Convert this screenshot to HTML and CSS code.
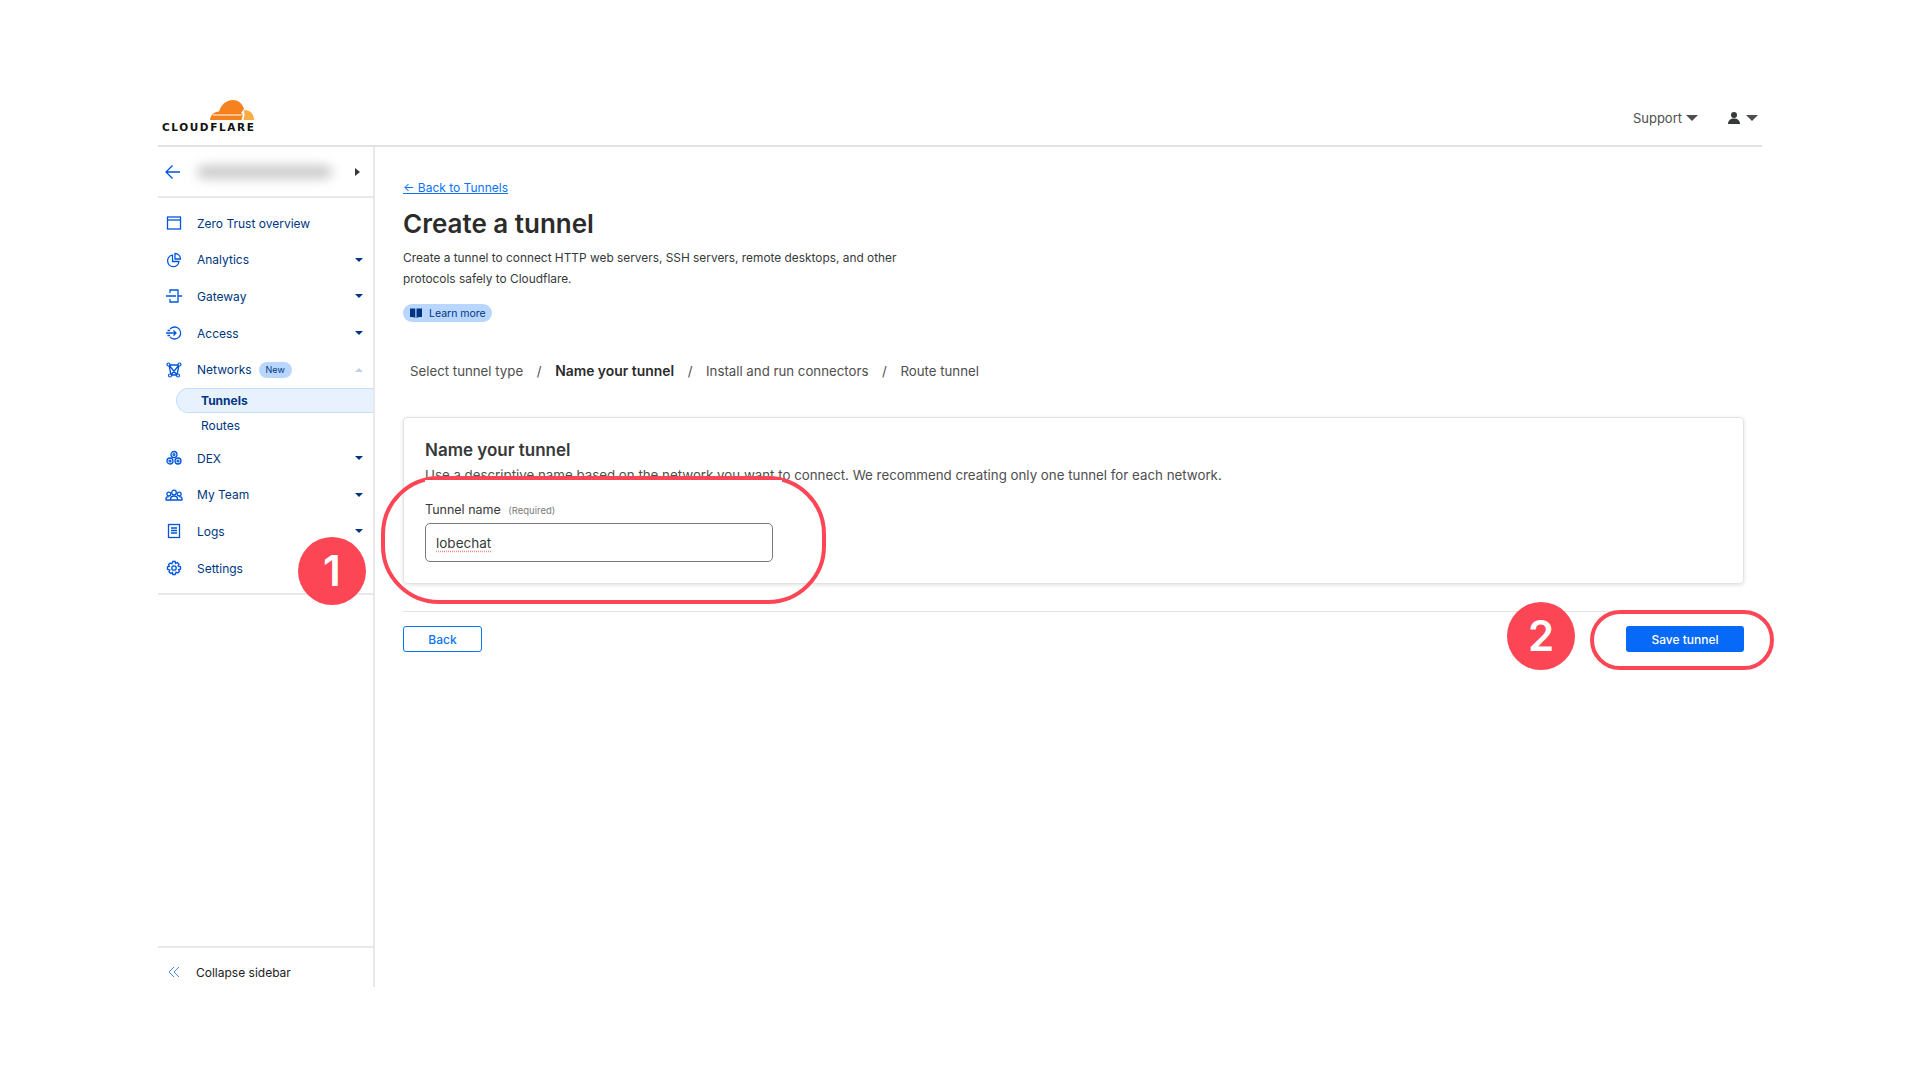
FILE: index.html
```html
<!DOCTYPE html>
<html lang="en">
<head>
    <meta charset="UTF-8">
    <title>Create a tunnel</title>
    <link rel="stylesheet" href="styles.css">
</head>
<body>
    <div class="app">
        <header class="topbar">
            <div class="logo">
                <svg class="logo-cloud" width="44" height="20" viewBox="0 0 44 20">
                    <path fill="#f6821f" d="M0 20C0.500 15 4 12 9 11.500C11 5 16 0 23 0C28 0 32 3 34 9L31 13L33 14L31.500 20Z"/>
                    <path fill="#fbad41" d="M34 10C39 9.500 44 13 44 20H33.500L34.500 14.500Z"/>
                    <path fill="#fff" d="M3 14.500H31L35 14L31 15.500H3Z"/>
                </svg>
                <span class="logo-text">CLOUDFLARE</span>
            </div>
            <div class="top-actions">
                <span class="support">Support <i class="caret-dark"></i></span>
                <span class="user">
                    <svg width="12" height="12" viewBox="0 0 12 12"><circle cx="6" cy="3" r="3" fill="#36393a"/><path d="M0 12C0 8.500 2.500 6.500 6 6.500S12 8.500 12 12Z" fill="#36393a"/></svg>
                    <i class="caret-dark"></i>
                </span>
            </div>
        </header>

        <div class="layout">
            <aside class="sidebar">
                <div class="account-row">
                    <svg class="icon" width="16" height="16" viewBox="0 0 16 16"><path d="M15 8H1.500M7.500 1.500L1 8L7.500 14.500" class="stroke"/></svg>
                    <span class="blurred"></span>
                    <i class="caret-right"></i>
                </div>

                <nav class="nav">
                    <a class="nav-item">
                        <svg class="icon" width="16" height="16" viewBox="0 0 16 16"><rect x="1.500" y="2" width="13" height="12" class="stroke"/><path d="M1.500 5H14.500" class="stroke"/></svg>
                        <span>Zero Trust overview</span>
                    </a>
                    <a class="nav-item">
                        <svg class="icon" width="16" height="16" viewBox="0 0 16 16"><path d="M6.500 3.200A5.700 5.700 0 1 0 13 9.500H6.500Z" class="stroke"/><path d="M9 1.500A5.500 5.500 0 0 1 14.500 7H9Z" class="stroke"/></svg>
                        <span>Analytics</span><i class="caret"></i>
                    </a>
                    <a class="nav-item">
                        <svg class="icon" width="18" height="16" viewBox="0 0 18 16"><path d="M5 5V2H13V14H5V11M1 8H11M13 8H17" class="stroke"/></svg>
                        <span>Gateway</span><i class="caret"></i>
                    </a>
                    <a class="nav-item">
                        <svg class="icon" width="18" height="16" viewBox="0 0 18 16"><path d="M5 4.200A6 6 0 1 1 5 11.800M1 8H11M8.500 5.500L11 8L8.500 10.500M2.500 5.500H5M2.500 10.500H5" class="stroke"/></svg>
                        <span>Access</span><i class="caret"></i>
                    </a>
                    <a class="nav-item">
                        <svg class="icon" width="16" height="16" viewBox="0 0 16 16"><path d="M3 3L13 3L11 13L5 13Z M3 3L11 13 M13 3L5 13 M3 3L5 13 M13 3L11 13" class="stroke"/><circle cx="2.500" cy="2.500" r="1.500" class="dot"/><circle cx="13.500" cy="2.500" r="1.500" class="dot"/><circle cx="4" cy="13.500" r="1.500" class="dot"/><circle cx="12" cy="13.500" r="1.500" class="dot"/></svg>
                        <span>Networks</span><span class="badge">New</span><i class="caret caret-up"></i>
                    </a>
                    <div class="subnav">
                        <a class="sub-item sub-active">Tunnels</a>
                        <a class="sub-item">Routes</a>
                    </div>
                    <a class="nav-item">
                        <svg class="icon" width="16" height="16" viewBox="0 0 16 16"><circle cx="8" cy="4.500" r="3" class="stroke"/><circle cx="4" cy="11" r="3" class="stroke"/><circle cx="12" cy="11" r="3" class="stroke"/><circle cx="8" cy="4.500" r="1" class="dot"/><circle cx="4" cy="11" r="1" class="dot"/><circle cx="12" cy="11" r="1" class="dot"/></svg>
                        <span>DEX</span><i class="caret"></i>
                    </a>
                    <a class="nav-item">
                        <svg class="icon" width="18" height="16" viewBox="0 0 18 16"><circle cx="9" cy="5.500" r="2.300" class="stroke"/><circle cx="3.800" cy="7" r="1.900" class="stroke"/><circle cx="14.200" cy="7" r="1.900" class="stroke"/><path d="M5.500 12.500C5.500 10 7 9 9 9S12.500 10 12.500 12.500M0.800 12.500C0.800 10.500 2 9.700 3.800 9.700M17.200 12.500C17.200 10.500 16 9.700 14.200 9.700M0.500 13H17.500" class="stroke"/></svg>
                        <span>My Team</span><i class="caret"></i>
                    </a>
                    <a class="nav-item">
                        <svg class="icon" width="16" height="16" viewBox="0 0 16 16"><rect x="2.500" y="1.500" width="11" height="13" class="stroke"/><path d="M5 5H11M5 7.500H11M5 10H11" class="stroke"/></svg>
                        <span>Logs</span><i class="caret"></i>
                    </a>
                    <a class="nav-item">
                        <svg class="icon" width="16" height="16" viewBox="0 0 16 16"><circle cx="8" cy="8" r="2.200" class="stroke"/><path d="M6.800 1.500H9.200L9.600 3.400L11.300 2.500L13 4.200L12.100 5.900L14.500 6.800V9.200L12.600 9.600L13.500 11.300L11.800 13L10.100 12.100L9.200 14.500H6.800L6.400 12.600L4.700 13.500L3 11.800L3.900 10.100L1.500 9.200V6.800L3.400 6.400L2.500 4.700L4.200 3L5.900 3.900Z" class="stroke"/></svg>
                        <span>Settings</span>
                    </a>
                </nav>

                <div class="collapse-row">
                    <svg class="icon" width="14" height="14" viewBox="0 0 14 14"><path d="M7 2L2 7L7 12M12 2L7 7L12 12" class="stroke thin"/></svg>
                    <span>Collapse sidebar</span>
                </div>
            </aside>

            <main class="content">
                <a class="back-link">← Back to Tunnels</a>
                <h1>Create a tunnel</h1>
                <p class="intro">Create a tunnel to connect HTTP web servers, SSH servers, remote desktops, and other protocols safely to Cloudflare.</p>
                <a class="learn-pill">
                    <svg width="12" height="10" viewBox="0 0 12 10"><path d="M0 0.500H5.300V10C4 9 2 8.800 0 9Z" fill="#003681"/><path d="M6.500 0.500H12V9C10 8.800 8 9 6.500 10Z" fill="#003681"/></svg>
                    Learn more
                </a>

                <div class="steps">
                    <span>Select tunnel type</span>
                    <span class="slash">/</span>
                    <span class="step-current">Name your tunnel</span>
                    <span class="slash">/</span>
                    <span>Install and run connectors</span>
                    <span class="slash">/</span>
                    <span>Route tunnel</span>
                </div>

                <section class="card">
                    <h2>Name your tunnel</h2>
                    <p class="card-sub">Use a descriptive name based on the network you want to connect. We recommend creating only one tunnel for each network.</p>
                    <label class="field-label">Tunnel name <small>(Required)</small></label>
                    <div class="text-input"><span class="misspelled">lobechat</span></div>
                </section>

                <div class="form-actions">
                    <button class="btn btn-outline">Back</button>
                    <button class="btn btn-primary">Save tunnel</button>
                </div>
            </main>
        </div>
    </div>

    <!-- annotations on top of the screenshot -->
    <div class="ring ring-name"></div>
    <div class="ring ring-save"></div>
    <div class="step-dot dot-one">1</div>
    <div class="step-dot dot-two">2</div>
</body>
</html>
```

FILE: styles.css
```css
* {
    margin: 0;
    padding: 0;
    box-sizing: border-box;
}

body {
    background: #fff;
    font-family: Inter, 'Noto Sans', sans-serif;
    color: #313131;
    overflow: hidden;
}

.app {
    width: 1604px;
    margin: 80px 0 0 158px;
}

/* Header */
.topbar {
    height: 67px;
    border-bottom: 2px solid #e2e2e2;
    display: flex;
    justify-content: space-between;
    align-items: flex-start;
}

.logo {
    width: 100px;
    margin: 20px 0 0 4px;
    display: flex;
    flex-direction: column;
}

.logo-cloud {
    margin-left: 48px;
    display: block;
}

.logo-text {
    margin-top: 1px;
    font-family: 'DejaVu Sans', sans-serif;
    font-size: 10.500px;
    font-weight: bold;
    letter-spacing: 1.600px;
    line-height: 12px;
    color: #111;
    white-space: nowrap;
}

.top-actions {
    display: flex;
    align-items: center;
    gap: 30px;
    margin: 30px 4px 0 0;
    font-size: 13px;
    color: #4e4e4e;
}

.support,
.user {
    display: flex;
    align-items: center;
    gap: 4px;
}

.user {
    gap: 6px;
}

.caret-dark {
    display: block;
    border-left: 6px solid transparent;
    border-right: 6px solid transparent;
    border-top: 6px solid #4e4e4e;
}

/* Sidebar */
.layout {
    display: flex;
}

.sidebar {
    width: 217px;
    height: 840px;
    border-right: 2px solid #e8e8e8;
    display: flex;
    flex-direction: column;
    font-size: 12px;
    color: #003681;
}

.account-row {
    height: 51px;
    border-bottom: 2px solid #e8e8e8;
    display: flex;
    align-items: center;
    padding: 0 13px 0 7px;
    flex-shrink: 0;
}

.blurred {
    width: 135px;
    height: 12px;
    margin-left: 16px;
    background: #c4c4c4;
    border-radius: 6px;
    filter: blur(6px);
}

.caret-right {
    margin-left: auto;
    border-top: 4px solid transparent;
    border-bottom: 4px solid transparent;
    border-left: 5px solid #36393a;
}

.icon {
    flex-shrink: 0;
}

.stroke {
    fill: none;
    stroke: #0055dc;
    stroke-width: 1.300;
}

.stroke.thin {
    stroke: #4a86e8;
    stroke-width: 1;
}

.dot {
    fill: #fff;
    stroke: #0055dc;
    stroke-width: 1.200;
}

.nav {
    padding: 7px 0 7px;
    border-bottom: 2px solid #e8e8e8;
}

.nav-item {
    height: 36.600px;
    display: flex;
    align-items: center;
    padding: 0 10px 0 7px;
}

.nav-item .icon {
    width: 18px;
    margin-right: 14px;
}

.caret {
    margin-left: auto;
    border-left: 4px solid transparent;
    border-right: 4px solid transparent;
    border-top: 4px solid #003681;
}

.caret-up {
    border-top: none;
    border-bottom: 4px solid #c3cfe2;
}

.badge {
    margin-left: 7px;
    height: 16px;
    padding: 0 7px;
    border-radius: 8px;
    background: #b9d6ff;
    font-size: 9px;
    line-height: 16px;
}

.subnav {
    padding-bottom: 2px;
}

.sub-item {
    height: 25px;
    margin-left: 18px;
    padding-left: 25px;
    display: flex;
    align-items: center;
}

.sub-active {
    background: #e8f2ff;
    border: 1px solid #c5deff;
    border-right: none;
    border-radius: 13px 0 0 13px;
    padding-left: 24px;
    font-weight: 700;
}

.collapse-row {
    margin-top: auto;
    height: 41px;
    border-top: 2px solid #e8e8e8;
    display: flex;
    align-items: center;
    gap: 15px;
    padding: 9px 0 0 9px;
    color: #222;
    flex-shrink: 0;
}

/* Main content */
.content {
    flex: 1;
    padding: 33px 18px 0 28px;
}

.back-link {
    display: block;
    font-size: 12px;
    line-height: 16px;
    color: #0a74f5;
    text-decoration: underline;
}

h1 {
    margin-top: 10px;
    font-size: 26px;
    line-height: 36px;
    font-weight: 600;
    color: #2b2b2b;
}

.intro {
    width: 510px;
    margin-top: 6px;
    font-size: 11.880px;
    line-height: 20.500px;
    color: #36393a;
}

.learn-pill {
    width: 89px;
    height: 18px;
    margin-top: 15px;
    border-radius: 9px;
    background: #b9d6ff;
    color: #003681;
    font-size: 10.500px;
    display: flex;
    align-items: center;
    gap: 7px;
    padding-left: 7px;
}

.steps {
    margin-top: 39px;
    padding-left: 7px;
    height: 20px;
    display: flex;
    align-items: center;
    gap: 13.600px;
    font-size: 13.250px;
    color: #4e4e4e;
    white-space: nowrap;
}

.step-current {
    font-weight: 600;
    font-size: 13.900px;
    color: #2b2b2b;
}

.card {
    height: 167px;
    margin-top: 36px;
    padding: 22px 21px 0;
    border: 1px solid #e2e2e2;
    border-radius: 4px;
    box-shadow: 0 1px 4px rgba(0, 0, 0, 0.12);
}

.card h2 {
    font-size: 17px;
    line-height: 20px;
    font-weight: 600;
    color: #36393a;
}

.card-sub {
    margin-top: 6px;
    font-size: 13.300px;
    line-height: 18px;
    color: #4e4e4e;
}

.field-label {
    display: block;
    margin-top: 18px;
    font-size: 12.500px;
    line-height: 16px;
    color: #36393a;
}

.field-label small {
    margin-left: 4px;
    font-size: 9.500px;
    color: #7a7a7a;
}

.text-input {
    width: 348px;
    height: 39px;
    margin-top: 4px;
    padding-left: 10px;
    border: 1px solid #7a7a7a;
    border-radius: 5px;
    font-size: 13.500px;
    line-height: 38px;
    color: #36393a;
}

.misspelled {
    text-decoration: underline dotted #f08a8a;
    text-underline-offset: 3px;
}

.form-actions {
    margin-top: 27px;
    padding-top: 14px;
    border-top: 1px solid #e2e2e2;
    display: flex;
    justify-content: space-between;
    align-items: flex-start;
}

.btn {
    height: 26px;
    border-radius: 3px;
    font-family: inherit;
    font-size: 12px;
    font-weight: 500;
}

.btn-outline {
    width: 79px;
    background: #fff;
    border: 1px solid #0a74f5;
    color: #0a74f5;
}

.btn-primary {
    width: 118px;
    background: #0669f7;
    border: none;
    color: #fff;
}

/* Annotations */
.ring {
    position: absolute;
    border: 4px solid #fd4655;
}

.ring-name {
    left: 381px;
    top: 476px;
    width: 445px;
    height: 128px;
    border-radius: 58px;
}

.ring-name::before {
    content: '';
    position: absolute;
    left: 40px;
    right: 40px;
    top: 0;
    height: 5px;
    background: #fff;
}

.ring-save {
    left: 1590px;
    top: 610px;
    width: 184px;
    height: 60px;
    border-radius: 30px;
}

.step-dot {
    position: absolute;
    width: 68px;
    height: 68px;
    border-radius: 50%;
    background: #fd4655;
    color: #fff;
    font-size: 42px;
    font-weight: 600;
    line-height: 68px;
    text-align: center;
}

.dot-one {
    left: 298px;
    top: 537px;
}

.dot-two {
    left: 1507px;
    top: 602px;
}
```
